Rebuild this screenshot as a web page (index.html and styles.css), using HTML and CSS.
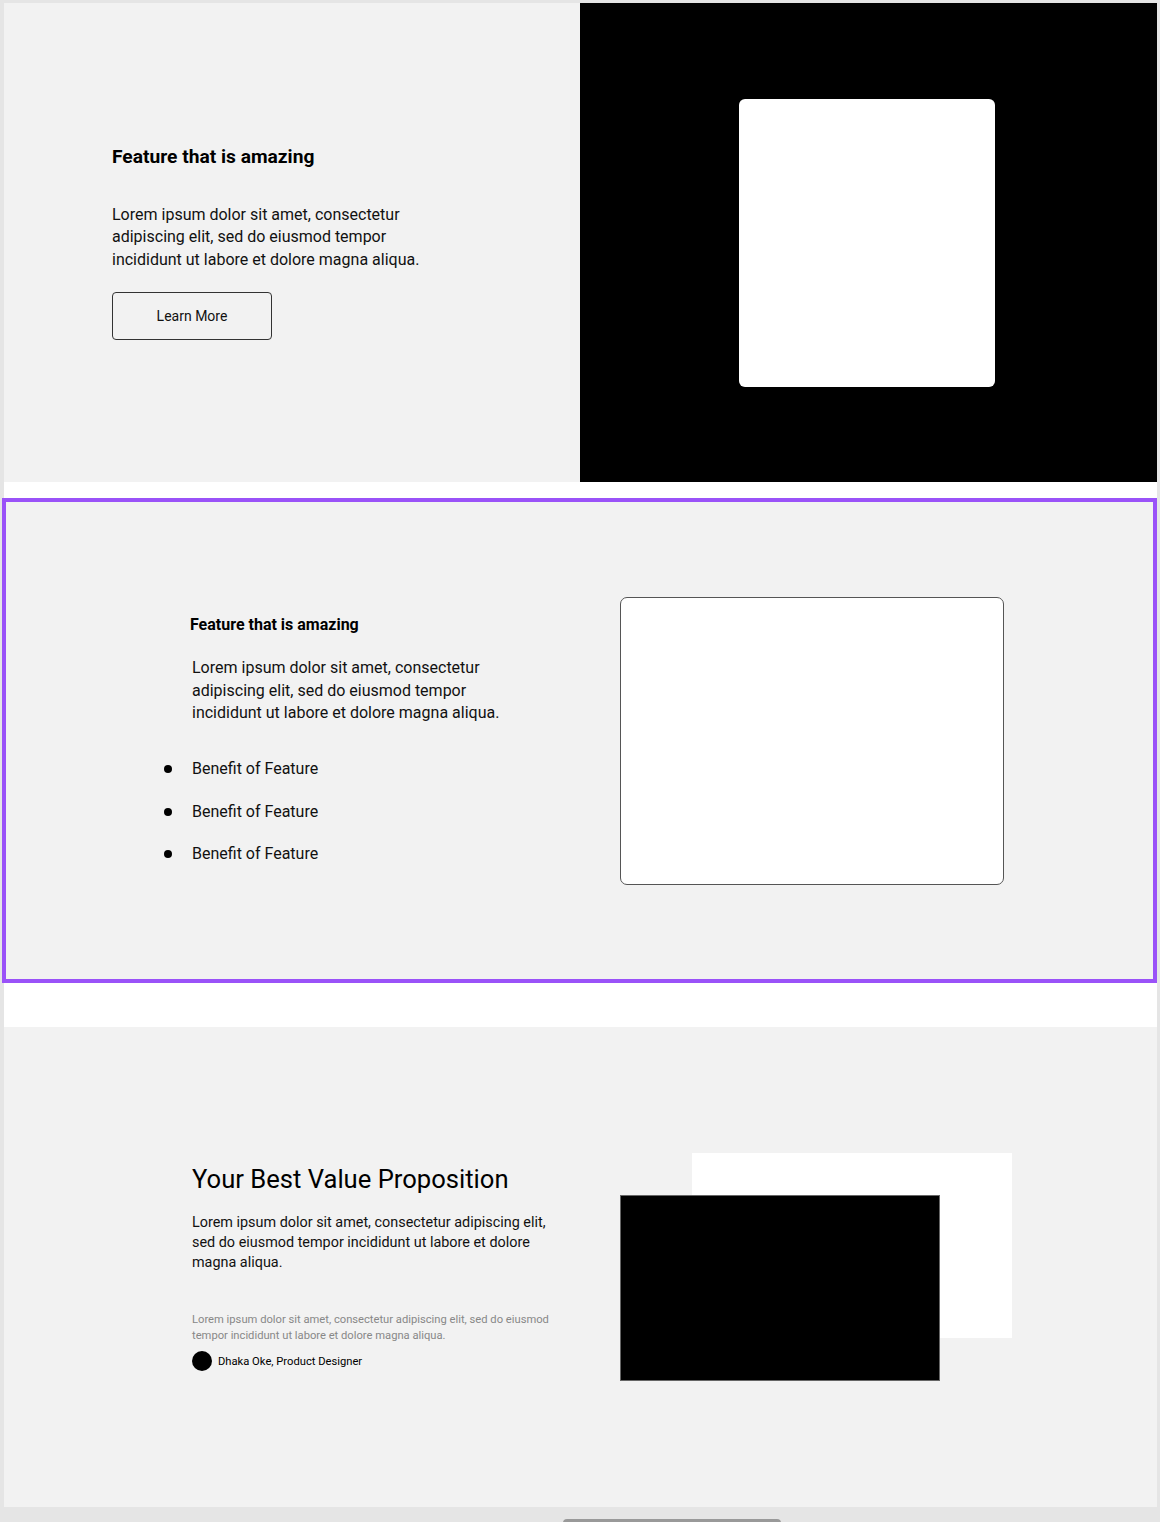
FILE: index.html
```html
<!DOCTYPE html>
<html lang="en">
<head>
    <meta charset="UTF-8">
    <meta name="viewport" content="width=device-width, initial-scale=1.0">
    <title>Feature Sections</title>
    <link rel="stylesheet" href="styles.css">
</head>
<body>
    <div class="page">
        <section class="hero">
            <div class="hero-text">
                <h2 class="title">Feature that is amazing</h2>
                <p class="text">Lorem ipsum dolor sit amet, consectetur adipiscing elit, sed do eiusmod tempor incididunt ut labore et dolore magna aliqua.</p>
                <button class="btn">Learn More</button>
            </div>
            <div class="hero-media">
                <div class="hero-card"></div>
            </div>
        </section>

        <section class="feature">
            <div class="feature-text">
                <h3 class="subtitle">Feature that is amazing</h3>
                <p class="text">Lorem ipsum dolor sit amet, consectetur adipiscing elit, sed do eiusmod tempor incididunt ut labore et dolore magna aliqua.</p>
                <ul class="benefits">
                    <li>Benefit of Feature</li>
                    <li>Benefit of Feature</li>
                    <li>Benefit of Feature</li>
                </ul>
            </div>
            <div class="feature-card"></div>
        </section>

        <section class="value">
            <div class="value-text">
                <h2 class="value-title">Your Best Value Proposition</h2>
                <p class="value-lead">Lorem ipsum dolor sit amet, consectetur adipiscing elit, sed do eiusmod tempor incididunt ut labore et dolore magna aliqua.</p>
                <p class="quote">Lorem ipsum dolor sit amet, consectetur adipiscing elit, sed do eiusmod tempor incididunt ut labore et dolore magna aliqua.</p>
                <div class="author">
                    <span class="avatar"></span>
                    <span>Dhaka Oke, Product Designer</span>
                </div>
            </div>
            <div class="value-media">
                <div class="media-back"></div>
                <div class="media-front"></div>
            </div>
        </section>
    </div>
    <div class="scroll-thumb"></div>
</body>
</html>
```

FILE: styles.css
```css
body {
    margin: 0;
    background-color: #e5e5e5;
    font-family: Roboto, "Liberation Sans", Arial, sans-serif;
    color: #111;
}

.page {
    width: 1153px;
    margin: 3px 0 0 4px;
    background-color: #fff;
}

/* section 1 */
.hero {
    display: flex;
    height: 479px;
}

.hero-text {
    box-sizing: border-box;
    flex: 0 0 576px;
    display: flex;
    flex-direction: column;
    justify-content: center;
    align-items: flex-start;
    padding-left: 108px;
    background-color: #f2f2f2;
}

.title {
    margin: 0 0 35px;
    font-size: 19.2px;
    font-weight: 700;
    line-height: 24px;
    color: #000;
}

.text {
    width: 320px;
    margin: 0;
    font-size: 16px;
    line-height: 22.5px;
}

.btn {
    width: 160px;
    height: 48px;
    margin-top: 21px;
    background: transparent;
    border: 1px solid #333;
    border-radius: 4px;
    font-family: inherit;
    font-size: 14px;
    color: #111;
    cursor: pointer;
}

.hero-media {
    box-sizing: border-box;
    flex: 1;
    display: flex;
    justify-content: center;
    align-items: center;
    padding-right: 3px;
    background-color: #000;
}

.hero-card {
    width: 256px;
    height: 288px;
    background-color: #fff;
    border-radius: 6px;
}

/* section 2 */
.feature {
    box-sizing: border-box;
    display: flex;
    align-items: center;
    gap: 38px;
    width: 1155px;
    height: 485px;
    margin: 16px 0 0 -2px;
    padding-left: 184px;
    background-color: #f2f2f2;
    border: 4px solid #9a52f8;
}

.feature-text {
    width: 390px;
    padding-left: 2px;
}

.subtitle {
    margin: 0 0 22px -2px;
    font-size: 16px;
    font-weight: 700;
    line-height: 20px;
    color: #000;
}

.feature-text .text {
    line-height: 22.3px;
}

.benefits {
    list-style: none;
    margin: 34px 0 0;
    padding: 0;
}

.benefits li {
    display: flex;
    align-items: center;
    margin-left: -28px;
    margin-bottom: 20px;
    font-size: 16px;
    line-height: 22.5px;
}

.benefits li:last-child {
    margin-bottom: 0;
}

.benefits li::before {
    content: "";
    width: 8px;
    height: 8px;
    margin-right: 20px;
    border-radius: 50%;
    background-color: #000;
}

.feature-card {
    box-sizing: border-box;
    width: 384px;
    height: 288px;
    background-color: #fff;
    border: 1px solid #555;
    border-radius: 7px;
}

/* section 3 */
.value {
    display: flex;
    align-items: center;
    height: 480px;
    margin-top: 44px;
    padding-left: 188px;
    background-color: #f2f2f2;
}

.value-text {
    width: 428px;
    padding-top: 2px;
}

.value-title {
    margin: 0 0 20px;
    font-size: 25.6px;
    font-weight: 400;
    line-height: 28px;
    color: #000;
}

.value-lead {
    width: 362px;
    margin: 0;
    font-size: 14.4px;
    line-height: 20px;
}

.quote {
    width: 370px;
    margin: 39px 0 7px;
    font-size: 11.2px;
    line-height: 16px;
    color: #888;
}

.author {
    display: flex;
    align-items: center;
    gap: 6px;
    font-size: 11.2px;
    color: #000;
}

.avatar {
    width: 20px;
    height: 20px;
    border-radius: 50%;
    background-color: #000;
}

.value-media {
    position: relative;
    width: 392px;
    height: 228px;
}

.media-back {
    position: absolute;
    top: 0;
    right: 0;
    width: 320px;
    height: 185px;
    background-color: #fff;
}

.media-front {
    position: absolute;
    left: 0;
    bottom: 0;
    box-sizing: border-box;
    width: 320px;
    height: 186px;
    background-color: #000;
    border: 1px solid #666;
}

.scroll-thumb {
    width: 218px;
    height: 8px;
    margin: 12px 0 0 563px;
    border-radius: 4px;
    background-color: #999;
}
```
